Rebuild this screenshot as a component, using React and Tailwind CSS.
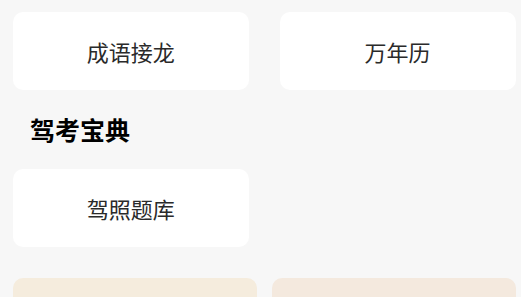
const tools = [
  [{ name: "成语接龙" }, { name: "万年历" }],
];

const Tile = ({ label }) => (
  <div className="h-[78px] rounded-[10px] bg-white flex items-center justify-center text-[22px] text-[#2a2a2a] leading-none">
    {label}
  </div>
);

const App = () => {
  return (
    <div
      className="w-[521px] h-[297px] overflow-hidden bg-[#f7f7f7] pl-[13px] pr-[5.5px] pt-[12px]"
      style={{ fontFamily: '"Noto Sans CJK SC", "Noto Sans", sans-serif' }}
    >
      {/* 常用工具 */}
      <div className="grid grid-cols-2 gap-x-[31px]">
        {tools[0].map((t) => (
          <Tile key={t.name} label={t.name} />
        ))}
      </div>

      {/* 驾考宝典 */}
      <div className="h-[79px] flex items-center pl-[17px]">
        <h2 className="text-[25px] font-bold text-black leading-none">驾考宝典</h2>
      </div>
      <div className="grid grid-cols-2 gap-x-[31px]">
        <Tile label="驾照题库" />
      </div>

      {/* banners */}
      <div className="grid grid-cols-2 gap-x-[15.5px] mt-[31px]">
        <div className="h-[80px] rounded-[10px] bg-[#f5ecdd]"></div>
        <div className="h-[80px] rounded-[10px] bg-[#f4e9de]"></div>
      </div>
    </div>
  );
};

export default App;
